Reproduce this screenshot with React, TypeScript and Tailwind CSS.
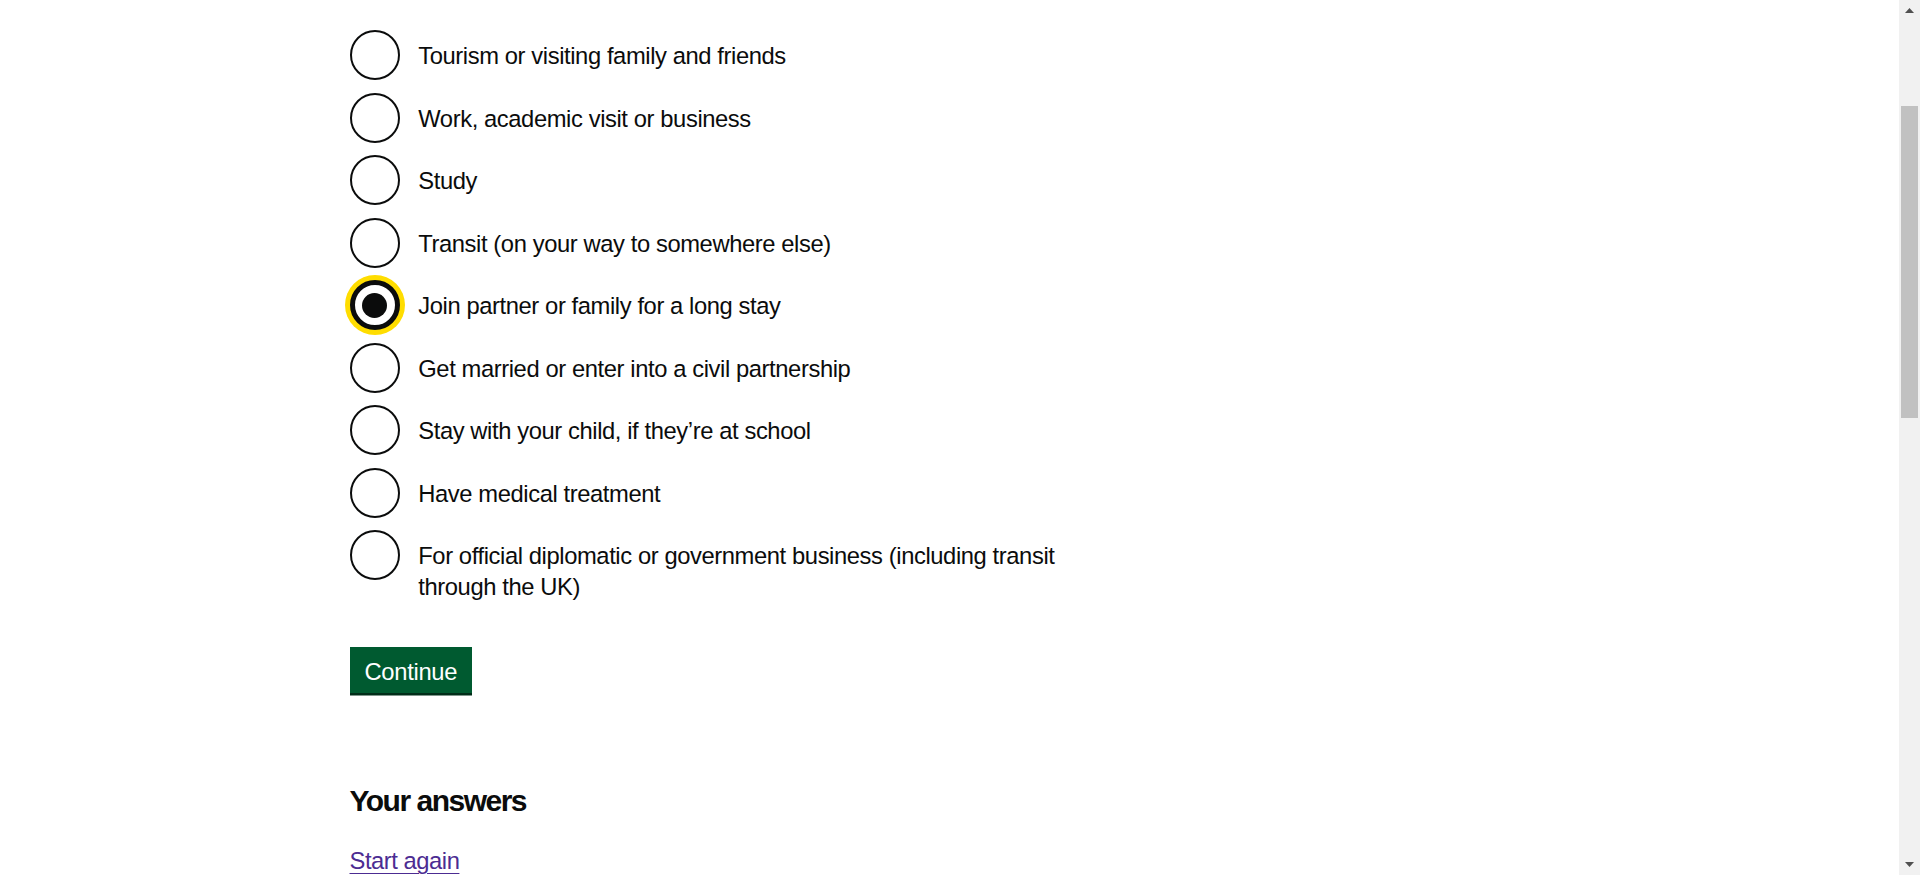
import { useState } from "react";

const options = [
  "Tourism or visiting family and friends",
  "Work, academic visit or business",
  "Study",
  "Transit (on your way to somewhere else)",
  "Join partner or family for a long stay",
  "Get married or enter into a civil partnership",
  "Stay with your child, if they\u2019re at school",
  "Have medical treatment",
  "For official diplomatic or government business (including transit through the UK)",
];

function Radio({
  label,
  checked,
  onSelect,
}: {
  label: string;
  checked: boolean;
  onSelect: () => void;
}) {
  return (
    <div
      className="flex min-h-[50px] mb-[12.5px] last:mb-0 cursor-pointer"
      onClick={onSelect}
    >
      {checked ? (
        <span className="flex items-center justify-center shrink-0 w-[50px] h-[50px] rounded-full border-[5px] border-[#0b0c0c] shadow-[0_0_0_5px_#ffdd00] bg-white">
          <span className="block w-[25px] h-[25px] rounded-full bg-[#0b0c0c]" />
        </span>
      ) : (
        <span className="block shrink-0 w-[50px] h-[50px] rounded-full border-[2.5px] border-[#0b0c0c] bg-white" />
      )}
      <label className="block max-w-[712.5px] pt-[10px] pb-[6.25px] px-[18.75px] text-[23.75px] leading-[31.25px] tracking-[-0.4px] text-[#0b0c0c] cursor-pointer">
        {label}
      </label>
    </div>
  );
}

function Scrollbar() {
  return (
    <div className="flex flex-col shrink-0 w-[21px] h-full bg-[#f1f1f1]">
      <div className="flex items-center justify-center h-[21px]">
        <svg width="9" height="5" viewBox="0 0 9 5">
          <polygon points="4.5,0 9,5 0,5" fill="#505050" />
        </svg>
      </div>
      <div className="flex-1">
        <div className="mt-[85px] ml-[2px] w-[17px] h-[312px] bg-[#c1c1c1]" />
      </div>
      <div className="flex items-center justify-center h-[21px]">
        <svg width="9" height="5" viewBox="0 0 9 5">
          <polygon points="0,0 9,0 4.5,5" fill="#505050" />
        </svg>
      </div>
    </div>
  );
}

export default function App() {
  const [selected, setSelected] = useState(4);

  return (
    <div className="flex h-[875px] w-full overflow-hidden bg-white font-['Liberation_Sans',Arial,sans-serif] text-[#0b0c0c]">
      <div className="flex-1 min-w-0">
        <div className="max-w-[1200px] mx-auto pt-[30px]">
          <div className="w-[762.5px]">
            {/* Radios */}
            <div className="mb-[38.5px]">
              {options.map((opt, i) => (
                <Radio
                  key={opt}
                  label={opt}
                  checked={selected === i}
                  onSelect={() => setSelected(i)}
                />
              ))}
            </div>

            <button className="flex items-center h-[46px] pt-[3px] px-[15px] bg-[#005a30] text-white text-[23.75px] leading-none tracking-[-0.3px] shadow-[0_2.5px_0_#002d18]">
              Continue
            </button>

            {/* Answers */}
            <h2 className="mt-[89px] mb-[25px] text-[30px] leading-[37.5px] font-bold tracking-[-1.5px]">
              Your answers
            </h2>
            <p className="text-[23.75px] leading-[31.25px] tracking-[-0.45px]">
              <a
                href="#"
                className="text-[#4c2c92] underline decoration-[1.25px] underline-offset-[3.75px]"
              >
                Start again
              </a>
            </p>
          </div>
        </div>
      </div>
      <Scrollbar />
    </div>
  );
}
